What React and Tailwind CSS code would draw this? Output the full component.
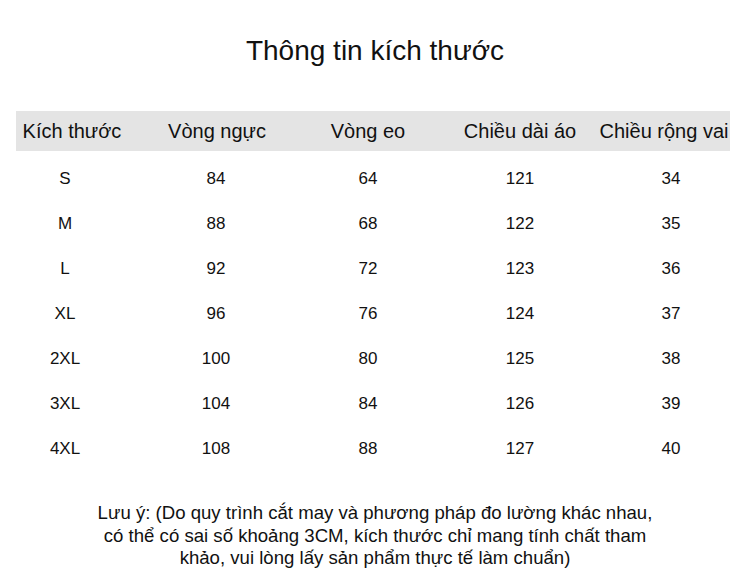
const headers = ['Kích thước', 'Vòng ngực', 'Vòng eo', 'Chiều dài áo', 'Chiều rộng vai'];

const rows = [
  ['S', '84', '64', '121', '34'],
  ['M', '88', '68', '122', '35'],
  ['L', '92', '72', '123', '36'],
  ['XL', '96', '76', '124', '37'],
  ['2XL', '100', '80', '125', '38'],
  ['3XL', '104', '84', '126', '39'],
  ['4XL', '108', '88', '127', '40'],
];

// column boxes so the centres fall at 65 / 216 / 368 / 520 / 671
const cols = 'grid grid-cols-[130px_172px_132px_172px_130px]';

export default function App() {
  return (
    <div
      className="h-[585px] w-[750px] overflow-hidden bg-white text-[#111]"
      style={{ fontFamily: '"Liberation Sans", Arial, sans-serif' }}
    >
      <h1 className="pt-[33px] text-center text-[28px] leading-[36px] font-normal">
        Thông tin kích thước
      </h1>

      <div className="mt-[42px] ml-4 grid h-10 w-[714px] grid-cols-[112px_178px_124px_180px_108px] items-center bg-[#e4e4e4] text-[20px]">
        {headers.map((h) => (
          <div key={h} className="flex justify-center whitespace-nowrap">
            {h}
          </div>
        ))}
      </div>

      <div className="pt-[5px] text-[17px]">
        {rows.map((r) => (
          <div key={r[0]} className={`${cols} h-[45px] items-center`}>
            {r.map((c, i) => (
              <div key={i} className="text-center">
                {c}
              </div>
            ))}
          </div>
        ))}
      </div>

      <p className="mt-[31px] text-center text-[18.6px] leading-[22.5px]">
        Lưu ý: (Do quy trình cắt may và phương pháp đo lường khác nhau,
        <br />
        có thể có sai số khoảng 3CM, kích thước chỉ mang tính chất tham
        <br />
        khảo, vui lòng lấy sản phẩm thực tế làm chuẩn)
      </p>
    </div>
  );
}
